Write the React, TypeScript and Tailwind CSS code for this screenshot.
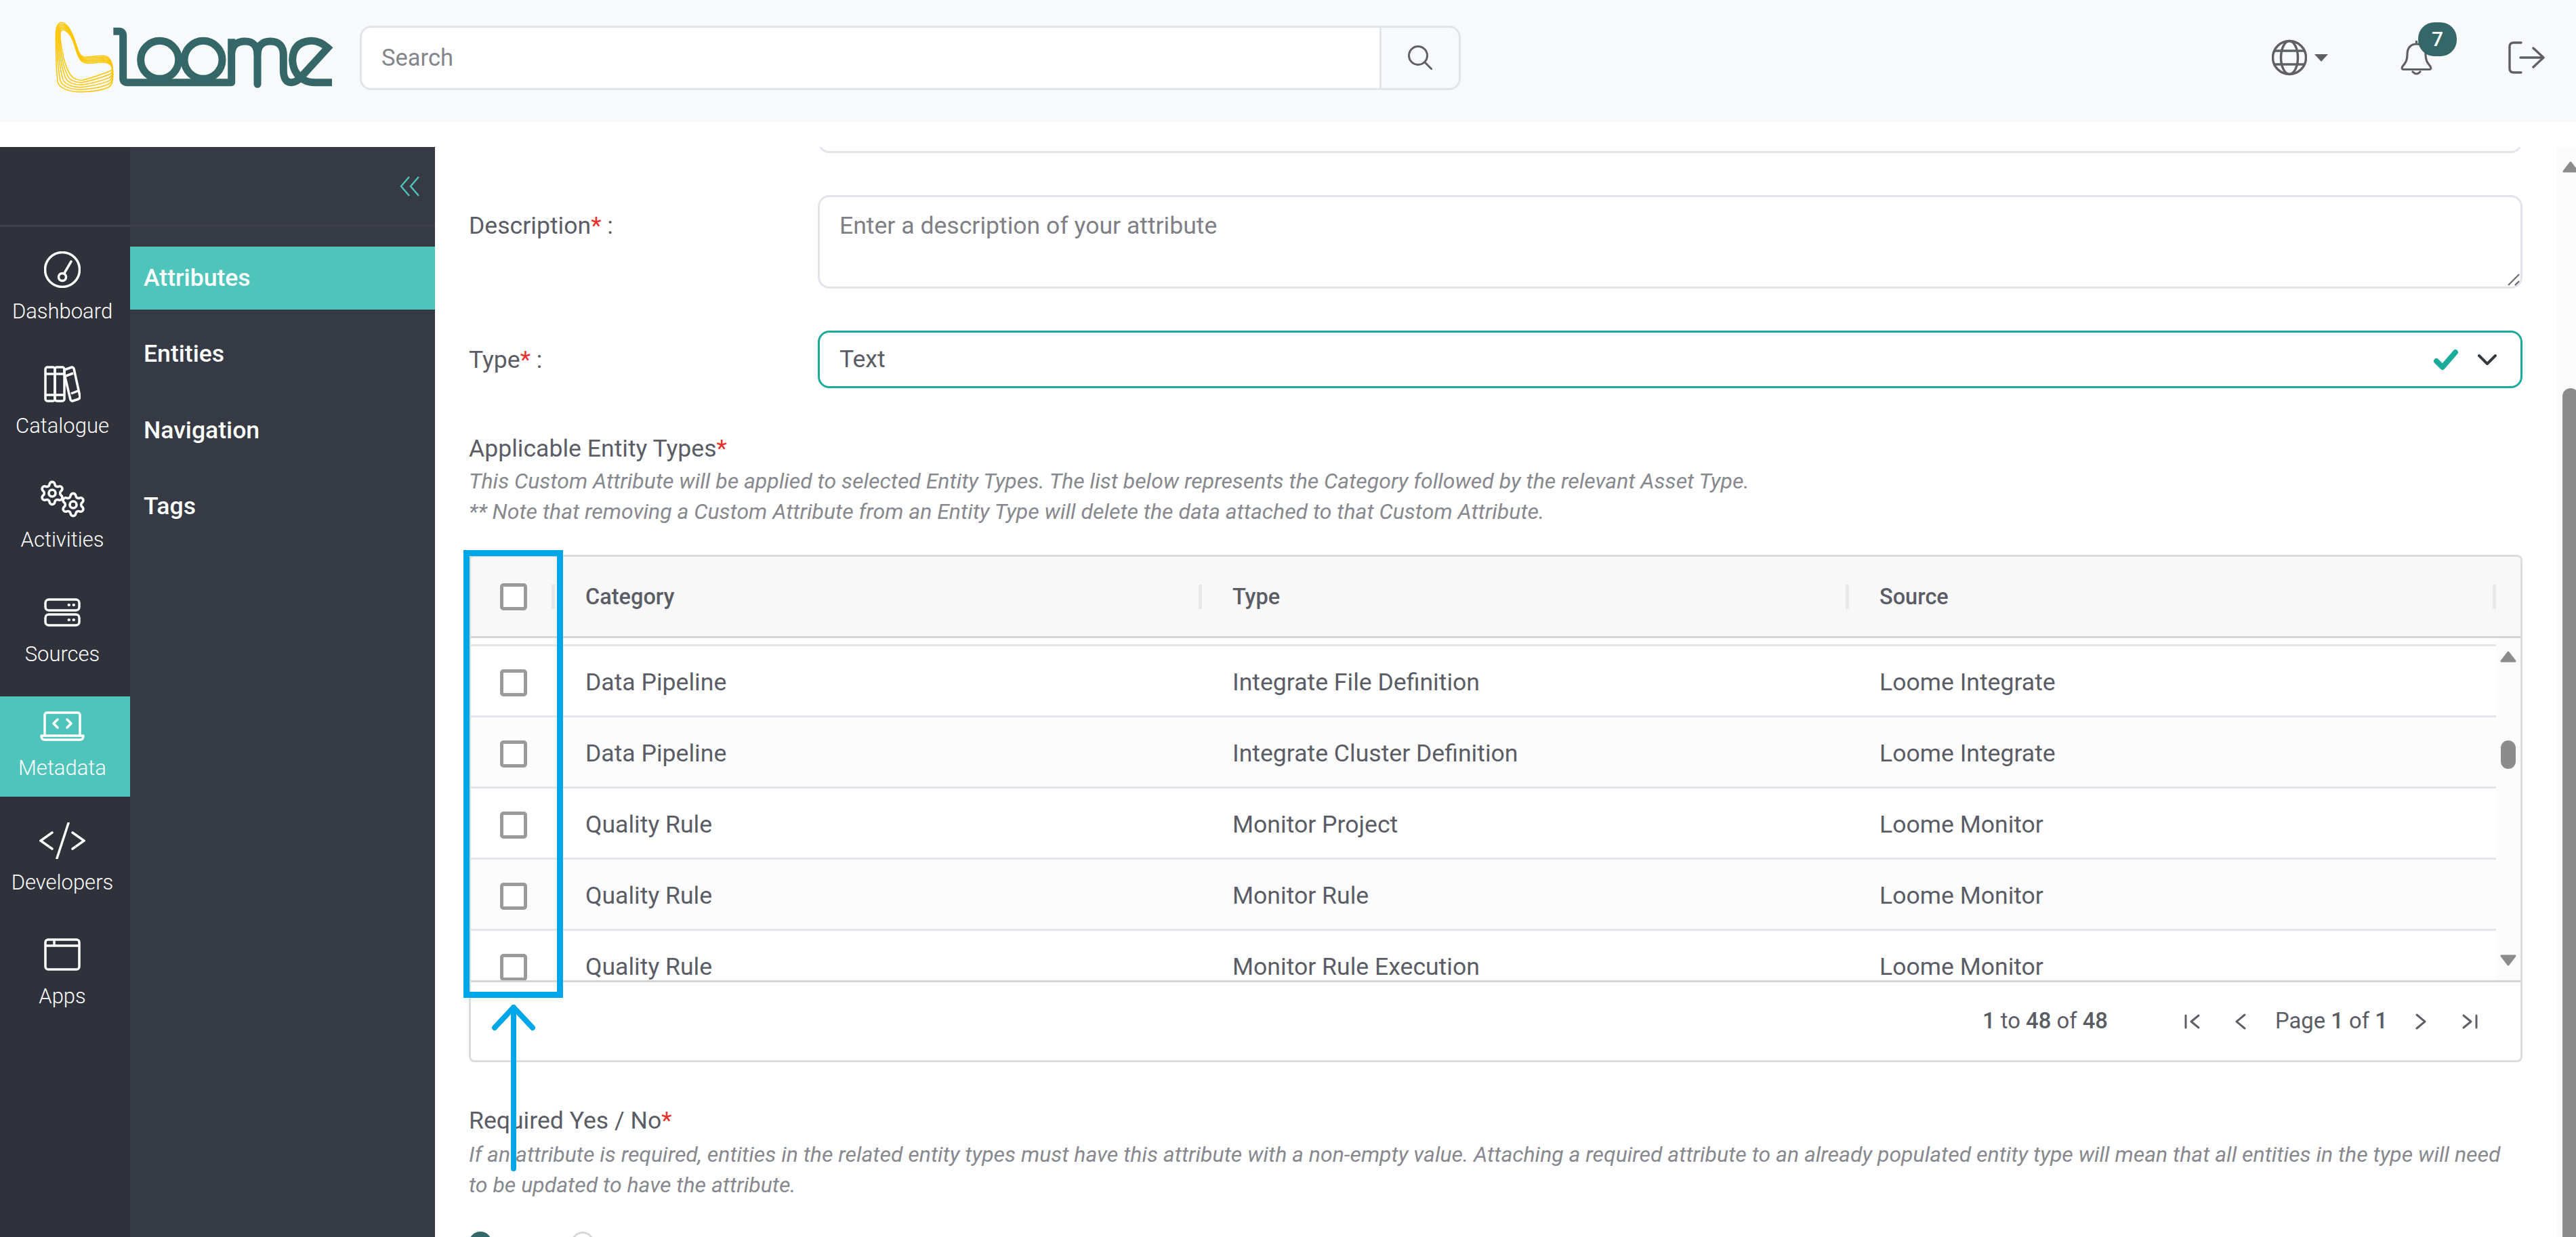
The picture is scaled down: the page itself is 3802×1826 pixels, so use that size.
import { Settings } from 'lucide-react';

type Pt = [number, number, number, number];

// ribbon loop, outer and inner edge of the logo mark
const loop: Pt[] = [
  [48, 25, 52, 57],
  [30, 25, 44, 57], [22, 45, 40, 70], [22, 85, 42, 95],
  [22, 150, 47, 150], [24, 230, 62, 220], [30, 285, 88, 258],
  [34, 315, 98, 272], [80, 332, 120, 282], [130, 332, 140, 280],
  [180, 332, 190, 268], [225, 325, 235, 250], [255, 312, 262, 240],
  [272, 302, 268, 237], [275, 285, 272, 235], [275, 250, 272, 232],
  [275, 205, 272, 218], [262, 175, 260, 202], [235, 172, 235, 200],
  [200, 172, 205, 200], [175, 178, 180, 207], [155, 178, 160, 205],
  [125, 178, 130, 205], [122, 150, 118, 170], [108, 110, 105, 125],
  [95, 70, 95, 90], [72, 25, 75, 57], [48, 25, 52, 57],
];

const ribbon = (t: number) => {
  const p = loop.map((q) => `${q[0] + (q[2] - q[0]) * t} ${q[1] + (q[3] - q[1]) * t}`);
  let d = `M${p[0]}`;
  for (let i = 1; i < p.length; i += 3) d += ` C${p[i]} ${p[i + 1]} ${p[i + 2]}`;
  return d + 'Z';
};

function Logo() {
  return (
    <svg viewBox="0 0 1290 360" className="w-[430px] h-[120px] shrink-0" role="img" aria-label="Loome">
      <g fill="none" stroke="#fdc500" strokeWidth="4.5">
        {[0, 0.2, 0.4, 0.6, 0.8, 1].map((t) => (
          <path key={t} d={ribbon(t)} />
        ))}
      </g>
      <g fill="none" stroke="#356769" strokeWidth="33">
        <path d="M277 64H303Q320 64 320 84V272Q320 290 338 290H800V97" strokeLinejoin="round" />
        <circle cx="482" cy="190" r="84" />
        <circle cx="675" cy="190" r="84" />
        <path d="M800 160Q805 108 860 108Q915 108 915 170V298" strokeLinecap="round" />
        <path d="M915 170Q915 108 972 108Q1030 108 1030 170V240Q1032 292 1066 290Q1090 288 1108 266L1226 137Q1190 104 1150 106Q1072 112 1070 190Q1072 250 1120 278Q1140 290 1170 290H1245" />
      </g>
    </svg>
  );
}

function Star() {
  return <span className="text-[#e8302c]">*</span>;
}

function DashboardIcon() {
  return (
    <svg viewBox="0 0 54 54" className="w-[54px] h-[54px]" fill="none" stroke="#fff" strokeWidth="3.5" strokeLinecap="round">
      <circle cx="27" cy="27" r="25.5" />
      <circle cx="27" cy="38" r="5.5" />
      <path d="M29.5 33L40 15" />
    </svg>
  );
}

function CatalogueIcon() {
  return (
    <svg viewBox="0 0 54 54" className="w-[54px] h-[54px]" fill="none" stroke="#fff" strokeWidth="3.5" strokeLinejoin="round">
      <rect x="2" y="2" width="14" height="50" rx="3" />
      <rect x="16" y="2" width="14" height="50" rx="3" />
      <path d="M2 12H30M2 43H30" />
      <path d="M30 6L41 2Q43 2 44 4L53 45Q53 48 51 49L42 52Q40 52 39 50L30 12Z" />
      <path d="M32 15L43 11M40 41L50 37" />
    </svg>
  );
}

function ActivitiesIcon() {
  return (
    <div className="flex w-[71px] h-[54px]">
      <Settings className="w-[40px] h-[40px] shrink-0 text-white" strokeWidth={2.2} />
      <Settings className="w-[40px] h-[40px] shrink-0 text-white mt-[17px] -ml-[9px]" strokeWidth={2.2} />
    </div>
  );
}

function SourcesIcon() {
  return (
    <svg viewBox="0 0 54 54" className="w-[54px] h-[54px]" fill="none" stroke="#fff" strokeWidth="3.5" strokeLinecap="round">
      <rect x="2" y="8" width="50" height="16" rx="5" />
      <rect x="2" y="30" width="50" height="16" rx="5" />
      <path d="M36.5 16H37M43.5 16H44M36.5 38H37M43.5 38H44" strokeWidth="4" />
    </svg>
  );
}

function MetadataIcon() {
  return (
    <svg viewBox="0 0 66 54" className="w-[66px] h-[54px]" fill="none" stroke="#fff" strokeWidth="3.5" strokeLinecap="round" strokeLinejoin="round">
      <path d="M7 39V11Q7 7 11 7H55Q59 7 59 11V39" />
      <path d="M2 41H64Q64 47 59 47H7Q2 47 2 41Z" />
      <path d="M26 17L20 23L26 29M40 17L46 23L40 29" />
    </svg>
  );
}

function DevelopersIcon() {
  return (
    <svg viewBox="0 0 68 54" className="w-[68px] h-[54px]" fill="none" stroke="#fff" strokeWidth="3.5" strokeLinecap="round">
      <path d="M19 15L2 27L19 39M49 15L66 27L49 39M43 1L26 53" />
    </svg>
  );
}

function AppsIcon() {
  return (
    <svg viewBox="0 0 54 54" className="w-[54px] h-[54px]" fill="none" stroke="#fff" strokeWidth="3.5" strokeLinejoin="round">
      <rect x="2" y="5" width="50" height="44" rx="4" />
      <path d="M2 14H52M15 5V14" />
    </svg>
  );
}

const railItems = [
  { label: 'Dashboard', icon: <DashboardIcon /> },
  { label: 'Catalogue', icon: <CatalogueIcon /> },
  { label: 'Activities', icon: <ActivitiesIcon /> },
  { label: 'Sources', icon: <SourcesIcon /> },
  { label: 'Metadata', icon: <MetadataIcon />, active: true },
  { label: 'Developers', icon: <DevelopersIcon /> },
  { label: 'Apps', icon: <AppsIcon /> },
];

const rows = [
  ['Data Pipeline', 'Integrate File Definition', 'Loome Integrate'],
  ['Data Pipeline', 'Integrate Cluster Definition', 'Loome Integrate'],
  ['Quality Rule', 'Monitor Project', 'Loome Monitor'],
  ['Quality Rule', 'Monitor Rule', 'Loome Monitor'],
  ['Quality Rule', 'Monitor Rule Execution', 'Loome Monitor'],
];

function Check() {
  return <div className="w-[40px] h-[40px] border-[5px] border-[#9a9a9a] rounded-[5px] bg-white shrink-0" />;
}

function Tri({ down }: { down?: boolean }) {
  return (
    <svg viewBox="0 0 24 17" className="w-[24px] h-[17px] shrink-0" fill="#8c8c8c" stroke="#8c8c8c" strokeWidth="3" strokeLinejoin="round">
      <path d={down ? 'M2 2H22L12 15Z' : 'M2 15H22L12 2Z'} />
    </svg>
  );
}

function PageBtn({ d, w }: { d: string; w: number }) {
  return (
    <svg viewBox={`0 0 ${w} 24`} style={{ width: w, height: 24 }} fill="none" stroke="#5f6066" strokeWidth="3" strokeLinecap="round" strokeLinejoin="round">
      <path d={d} />
    </svg>
  );
}

export default function App() {
  return (
    <div className="relative w-[3802px] h-[1826px] overflow-hidden bg-white text-[#5b5d66] text-[35.6px] [font-family:Roboto,sans-serif]">
      {/* top bar */}
      <header className="h-[180px] bg-[#f8f9fb] flex items-center pl-[75px] pb-[10px]">
        <Logo />
        <div className="ml-[26px] w-[1625px] h-[95px] border-[3px] border-[#e1e4e9] rounded-[17px] flex overflow-hidden">
          <div className="flex-1 bg-white pl-[29px] pt-[2px] flex items-center text-[#85868c] text-[34.5px]">Search</div>
          <div className="w-[117px] border-l-[3px] border-[#e1e4e9] flex items-center justify-center">
            <svg viewBox="0 0 36 36" className="w-[36px] h-[36px]" fill="none" stroke="#5f6066" strokeWidth="3" strokeLinecap="round">
              <circle cx="15" cy="15" r="13.5" />
              <path d="M25 25L35 35" />
            </svg>
          </div>
        </div>
        <div className="flex-1" />
        <svg viewBox="0 0 52 54" className="w-[52px] h-[54px]" fill="none" stroke="#5f6066" strokeWidth="3.5">
          <circle cx="26" cy="27" r="24.5" />
          <ellipse cx="26" cy="27" rx="12.5" ry="24.5" />
          <path d="M4 17H48M4 37H48" />
        </svg>
        <div className="ml-[11px] w-0 h-0 border-l-[10px] border-r-[10px] border-t-[11px] border-l-transparent border-r-transparent border-t-[#5f6066]" />
        <div className="relative ml-[107px] w-[47px] h-[51px]">
          <svg viewBox="0 0 47 51" className="w-[47px] h-[51px]" fill="none" stroke="#5f6066" strokeWidth="3.2" strokeLinecap="round" strokeLinejoin="round">
            <path d="M23.5 5C14 5 10 12 10 20C10 30 7 33 3 38Q1 42 4 42.5H43Q46 42 44 38C40 33 37 30 37 20C37 12 33 5 23.5 5Z" />
            <path d="M23.5 1V5M18 46Q23.5 52 29 46" />
          </svg>
          <span className="absolute left-[26px] -top-[27px] w-[57px] h-[50px] rounded-[24px] bg-[#356769] text-white text-[30px] font-medium flex items-center justify-center">7</span>
        </div>
        <svg viewBox="0 0 54 48" className="ml-[112px] mr-[46px] w-[54px] h-[48px]" fill="none" stroke="#5f6066" strokeWidth="3.4" strokeLinecap="round" strokeLinejoin="round">
          <path d="M19 2H8Q2 2 2 8V40Q2 46 8 46H19" />
          <path d="M18 24H52M37 10L52 24L37 38" />
        </svg>
      </header>

      <div className="mt-[37px] h-[1609px] flex">
        {/* icon rail */}
        <nav className="w-[192px] bg-[#2f323b] shrink-0">
          <div className="h-[118px] border-b-[3px] border-[#3e414b]" />
          <div className="pt-[19px] flex flex-col gap-[20.5px]">
            {railItems.map((item) => (
              <div key={item.label} className={`h-[148px] flex flex-col items-center pt-[17px] pr-[8px] ${item.active ? 'bg-[#4fc4bb]' : ''}`}>
                <div className="h-[54px] flex items-center justify-center">{item.icon}</div>
                <div className="mt-[15px] text-white text-[31px] leading-[40px] font-light">{item.label}</div>
              </div>
            ))}
          </div>
        </nav>

        {/* sub menu */}
        <nav className="w-[450px] bg-[#363a45] shrink-0">
          <div className="h-[118px] border-b-[3px] border-[#3e414b] flex items-center justify-end pr-[22px]">
            <svg viewBox="0 0 30 30" className="w-[30px] h-[30px]" fill="none" stroke="#4fc4bb" strokeWidth="2.4">
              <path d="M14 1L2 15L14 29M28 1L16 15L28 29" />
            </svg>
          </div>
          <div className="pt-[29px] flex flex-col gap-[19.4px] text-white font-medium">
            <div className="h-[93px] bg-[#4fc4bb] pl-[20px] flex items-center">Attributes</div>
            <div className="h-[93px] pl-[20px] flex items-center">Entities</div>
            <div className="h-[93px] pl-[20px] flex items-center">Navigation</div>
            <div className="h-[93px] pl-[20px] flex items-center">Tags</div>
          </div>
        </nav>

        {/* form */}
        <main className="flex-1 min-w-0 pl-[50px] pr-[51px] overflow-hidden">
          <div className="flex">
            <div className="w-[515px]" />
            <div className="flex-1 -mt-[76px] h-[85px] border-[3px] border-[#e1e4e9] rounded-[17px]" />
          </div>

          <div className="flex mt-[62px]">
            <div className="w-[515px] pt-[25px] leading-[40px]">
              Description<Star /> :
            </div>
            <div className="relative flex-1 h-[138px] border-[3px] border-[#e1e4e9] rounded-[17px] pl-[29px] pt-[22px] leading-[40px] text-[#7f8086]">
              Enter a description of your attribute
              <svg viewBox="0 0 18 18" className="absolute right-[1px] bottom-[1px] w-[18px] h-[18px]" fill="none" stroke="#666" strokeWidth="2">
                <path d="M1 17L17 1M11 17L17 11" />
              </svg>
            </div>
          </div>

          <div className="flex mt-[62px] items-center">
            <div className="w-[515px] leading-[40px]">
              Type<Star /> :
            </div>
            <div className="flex-1 h-[85px] border-[3px] border-[#1aab9b] rounded-[17px] pl-[29px] pr-[35px] flex items-center">
              <span className="flex-1">Text</span>
              <svg viewBox="0 0 38 32" className="w-[38px] h-[32px]" fill="none" stroke="#1aab9b" strokeWidth="8" strokeLinecap="round" strokeLinejoin="round">
                <path d="M5 18L14 27L33 5" />
              </svg>
              <svg viewBox="0 0 28 18" className="ml-[28px] w-[28px] h-[18px]" fill="none" stroke="#343a40" strokeWidth="4" strokeLinecap="round" strokeLinejoin="round">
                <path d="M2 3L14 15L26 3" />
              </svg>
            </div>
          </div>

          <div className="mt-[69px] leading-[40px]">
            Applicable Entity Types<Star />
          </div>
          <div className="mt-[6px] text-[32px] leading-[45px] italic text-[#88898e]">
            <div>This Custom Attribute will be applied to selected Entity Types. The list below represents the Category followed by the relevant Asset Type.</div>
            <div>** Note that removing a Custom Attribute from an Entity Type will delete the data attached to that Custom Attribute.</div>
          </div>

          {/* entity type grid */}
          <div className="mt-[41px] h-[749px] border-[3px] border-[#dcdcdc] rounded-[8px] overflow-hidden flex flex-col">
            <div className="h-[120px] shrink-0 pt-[1px] bg-[#f8f8f8] border-b-[3px] border-[#d4d5d7] grid grid-cols-[124px_955px_955px_955px] font-medium text-[32.5px]">
              <div className="flex items-center justify-end">
                <div className="mr-[36px]"><Check /></div>
                <div className="w-[5px] h-[36px] bg-[#e8e8e8]" />
              </div>
              {['Category', 'Type', 'Source'].map((h) => (
                <div key={h} className="flex items-center justify-between pl-[45px]">
                  <span>{h}</span>
                  <div className="w-[5px] h-[36px] bg-[#e8e8e8]" />
                </div>
              ))}
            </div>

            <div className="h-[505px] shrink-0 flex overflow-hidden">
              <div className="w-[2989px] shrink-0 pt-[9px]">
                {rows.map((r, i) => (
                  <div key={i} className={`h-[105px] pt-[5px] border-t-[3px] border-[#e2e5ea] grid grid-cols-[124px_955px_955px_955px] items-center ${i % 2 ? 'bg-[#fcfcfc]' : 'bg-white'}`}>
                    <div className="pl-[43px]"><Check /></div>
                    {r.map((c, j) => (
                      <div key={j} className="pl-[45px]">{c}</div>
                    ))}
                  </div>
                ))}
              </div>
              <div className="flex-1 bg-[#fbfbfb] flex flex-col items-center pt-[19px] pb-[21px]">
                <Tri />
                <div className="mt-[115px] w-[22px] h-[42px] rounded-[11px] bg-[#8c8c8c]" />
                <div className="flex-1" />
                <Tri down />
              </div>
            </div>

            <div className="flex-1 border-t-[3px] border-[#d4d5d7] flex items-center pl-[2231px] text-[32.8px]">
              <span className="w-[298px]">
                <b className="font-medium">1</b> to <b className="font-medium">48</b> of <b className="font-medium">48</b>
              </span>
              <PageBtn w={24} d="M2 3V21M21 3L10 12L21 21" />
              <div className="ml-[50px]"><PageBtn w={18} d="M15 2L3 12L15 22" /></div>
              <span className="ml-[42px] w-[206px]">
                Page <b className="font-medium">1</b> of <b className="font-medium">1</b>
              </span>
              <PageBtn w={18} d="M3 2L15 12L3 22" />
              <div className="ml-[51px]"><PageBtn w={24} d="M3 3L14 12L3 21M22 3V21" /></div>
            </div>
          </div>

          <div className="mt-[66px] leading-[40px]">
            Required Yes / No<Star />
          </div>
          <div className="mt-[8px] text-[32px] leading-[45px] italic text-[#88898e]">
            If an attribute is required, entities in the related entity types must have this attribute with a non-empty value. Attaching a required attribute to an already populated entity type will mean that all entities in the type will need to be updated to have the attribute.
          </div>
          <div className="mt-[46px] flex">
            <div className="w-[34px] h-[34px] rounded-full bg-[#356769]" />
            <div className="ml-[117px] w-[34px] h-[34px] rounded-full border-[3px] border-[#d8d8d8]" />
          </div>
        </main>

        {/* page scrollbar, cut by the window edge */}
        <div className="w-[28px] shrink-0 bg-[#fbfbfb] overflow-hidden pl-[8px] pt-[21px] flex flex-col">
          <Tri />
          <div className="mt-[318px] w-[24px] h-[1400px] shrink-0 rounded-[12px] bg-[#8c8c8c]" />
        </div>
      </div>

      {/* annotation over the checkbox column */}
      <div className="absolute left-[684px] top-[812px] w-[147px] h-[661px] border-[9px] border-[#00a7e8]" />
      <svg viewBox="0 0 70 250" className="absolute left-[723px] top-[1481px] w-[70px] h-[250px]" fill="none" stroke="#00a7e8" strokeWidth="8" strokeLinecap="round" strokeLinejoin="round">
        <path d="M35 6V244M7 36L35 6L63 36" />
      </svg>
    </div>
  );
}
